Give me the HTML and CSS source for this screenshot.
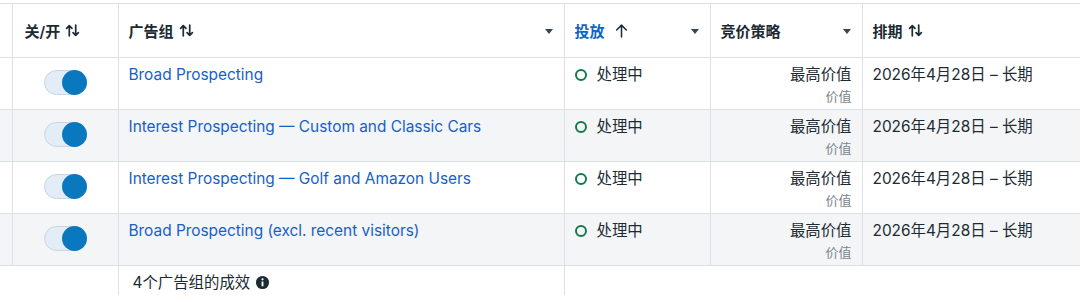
FILE: index.html
```html
<!DOCTYPE html>
<html lang="zh-CN">
<head>
<meta charset="UTF-8">
<title>广告组</title>
<link rel="stylesheet" href="styles.css">
</head>
<body>
<div class="grid-wrap">
<table class="adsets">
    <colgroup>
        <col class="c-edge">
        <col class="c-toggle">
        <col class="c-name">
        <col class="c-status">
        <col class="c-bid">
        <col class="c-sched">
    </colgroup>
    <thead>
        <tr>
            <th></th>
            <th><span class="hd">关/开 <svg class="sort" viewBox="0 0 14 14"><path d="M4 12V2.5M1.5 5L4 2.5 6.5 5M10 2v9.5M7.5 9L10 11.5 12.5 9"/></svg></span></th>
            <th><span class="hd">广告组 <svg class="sort" viewBox="0 0 14 14"><path d="M4 12V2.5M1.5 5L4 2.5 6.5 5M10 2v9.5M7.5 9L10 11.5 12.5 9"/></svg></span><span class="caret"></span></th>
            <th><span class="hd active">投放 <svg class="sort up" viewBox="0 0 14 14"><path d="M7 13V2M2.5 6.5L7 2l4.5 4.5"/></svg></span><span class="caret"></span></th>
            <th><span class="hd">竞价策略</span><span class="caret"></span></th>
            <th><span class="hd">排期 <svg class="sort" viewBox="0 0 14 14"><path d="M4 12V2.5M1.5 5L4 2.5 6.5 5M10 2v9.5M7.5 9L10 11.5 12.5 9"/></svg></span></th>
        </tr>
    </thead>
    <tbody>
        <tr>
            <td></td>
            <td class="tog"><span class="switch"><span class="knob"></span></span></td>
            <td><a href="#">Broad Prospecting</a></td>
            <td><span class="status"><span class="ring"></span>处理中</span></td>
            <td class="bid">最高价值<small>价值</small></td>
            <td>2026年4月28日 – 长期</td>
        </tr>
        <tr class="alt">
            <td></td>
            <td class="tog"><span class="switch"><span class="knob"></span></span></td>
            <td><a href="#">Interest Prospecting — Custom and Classic Cars</a></td>
            <td><span class="status"><span class="ring"></span>处理中</span></td>
            <td class="bid">最高价值<small>价值</small></td>
            <td>2026年4月28日 – 长期</td>
        </tr>
        <tr>
            <td></td>
            <td class="tog"><span class="switch"><span class="knob"></span></span></td>
            <td><a href="#">Interest Prospecting — Golf and Amazon Users</a></td>
            <td><span class="status"><span class="ring"></span>处理中</span></td>
            <td class="bid">最高价值<small>价值</small></td>
            <td>2026年4月28日 – 长期</td>
        </tr>
        <tr class="alt">
            <td></td>
            <td class="tog"><span class="switch"><span class="knob"></span></span></td>
            <td><a href="#">Broad Prospecting (excl. recent visitors)</a></td>
            <td><span class="status"><span class="ring"></span>处理中</span></td>
            <td class="bid">最高价值<small>价值</small></td>
            <td>2026年4月28日 – 长期</td>
        </tr>
    </tbody>
    <tfoot>
        <tr>
            <td class="nb"></td>
            <td class="nb"></td>
            <td class="sum">4个广告组的成效 <svg class="info" viewBox="0 0 16 16"><circle cx="8" cy="8" r="7"/><rect x="7" y="7" width="2" height="5" fill="#fff"/><circle cx="8" cy="4.6" r="1.2" fill="#fff"/></svg></td>
            <td></td>
            <td class="nb"></td>
            <td class="nb"></td>
        </tr>
    </tfoot>
</table>
</div>
</body>
</html>
```

FILE: styles.css
```css
body {
    margin: 0;
    padding-top: 3px;
    background-color: #fff;
    font-family: "Inter", "Noto Sans CJK SC", sans-serif;
    color: #1c2b33;
    overflow: hidden;
}
.grid-wrap {
    width: 1080px;
    overflow: hidden;
}
.adsets {
    border-collapse: collapse;
    table-layout: fixed;
    width: 1100px;
    font-size: 15.4px;
}
.c-edge { width: 12px; }
.c-toggle { width: 106px; }
.c-name { width: 446px; }
.c-status { width: 146px; }
.c-bid { width: 152px; }
.c-sched { width: 238px; }

.adsets th,
.adsets td {
    border-left: 1px solid #dcdfe3;
    border-bottom: 1px solid #dcdfe3;
    padding: 0 10px;
    text-align: left;
    vertical-align: top;
}
.adsets th:first-child,
.adsets td:first-child {
    border-left: none;
    padding: 0;
}
.adsets thead th {
    border-top: 1px solid #dcdfe3;
    height: 53px;
    vertical-align: middle;
    font-weight: 600;
    font-size: 15px;
    position: relative;
}
.adsets thead th:nth-child(2) {
    padding-left: 12px;
}
.hd {
    display: inline-flex;
    align-items: center;
    gap: 5px;
}
.hd.active {
    color: #0a66c2;
}
.sort {
    width: 15px;
    height: 15px;
    fill: none;
    stroke: #1c2b33;
    stroke-width: 1.6;
    stroke-linecap: round;
    stroke-linejoin: round;
}
.sort.up {
    width: 15px;
    height: 15px;
    margin-left: 4px;
    stroke-width: 1.4;
}
.caret {
    position: absolute;
    right: 11px;
    top: 50%;
    margin-top: -2px;
    border-left: 4px solid transparent;
    border-right: 4px solid transparent;
    border-top: 5px solid #344854;
}

.adsets tbody td {
    height: 52px;
    padding-top: 6px;
    box-sizing: border-box;
    line-height: 22px;
}
.adsets tbody tr.alt td {
    background-color: #f4f5f7;
}
.adsets a {
    color: #1660c6;
    text-decoration: none;
}
.tog {
    text-align: center !important;
}
.switch {
    display: inline-block;
    margin-top: 6px;
    margin-left: 1px;
    width: 43px;
    height: 25px;
    box-sizing: border-box;
    border: 1px solid #cbd5df;
    border-radius: 13px;
    background-color: #e2edf8;
    position: relative;
}
.knob {
    position: absolute;
    right: -1px;
    top: -1px;
    width: 25px;
    height: 25px;
    border-radius: 50%;
    background-color: #0a78be;
}
.status {
    display: inline-flex;
    align-items: center;
    gap: 10px;
}
.ring {
    width: 8px;
    height: 8px;
    border: 2px solid #107a4a;
    border-radius: 50%;
}
.bid {
    text-align: right !important;
}
.bid small {
    display: block;
    font-size: 13px;
    color: #7a858d;
    line-height: 20px;
}

.adsets tfoot td {
    border-bottom: none;
    height: 29px;
    padding-top: 7px;
    vertical-align: top;
}
.adsets tfoot td.nb {
    border-left: none;
}
.sum {
    padding-left: 14px !important;
    font-size: 15.4px;
    line-height: 20px;
}
.info {
    width: 15px;
    height: 15px;
    vertical-align: -2px;
    fill: #1c2b33;
}
```
